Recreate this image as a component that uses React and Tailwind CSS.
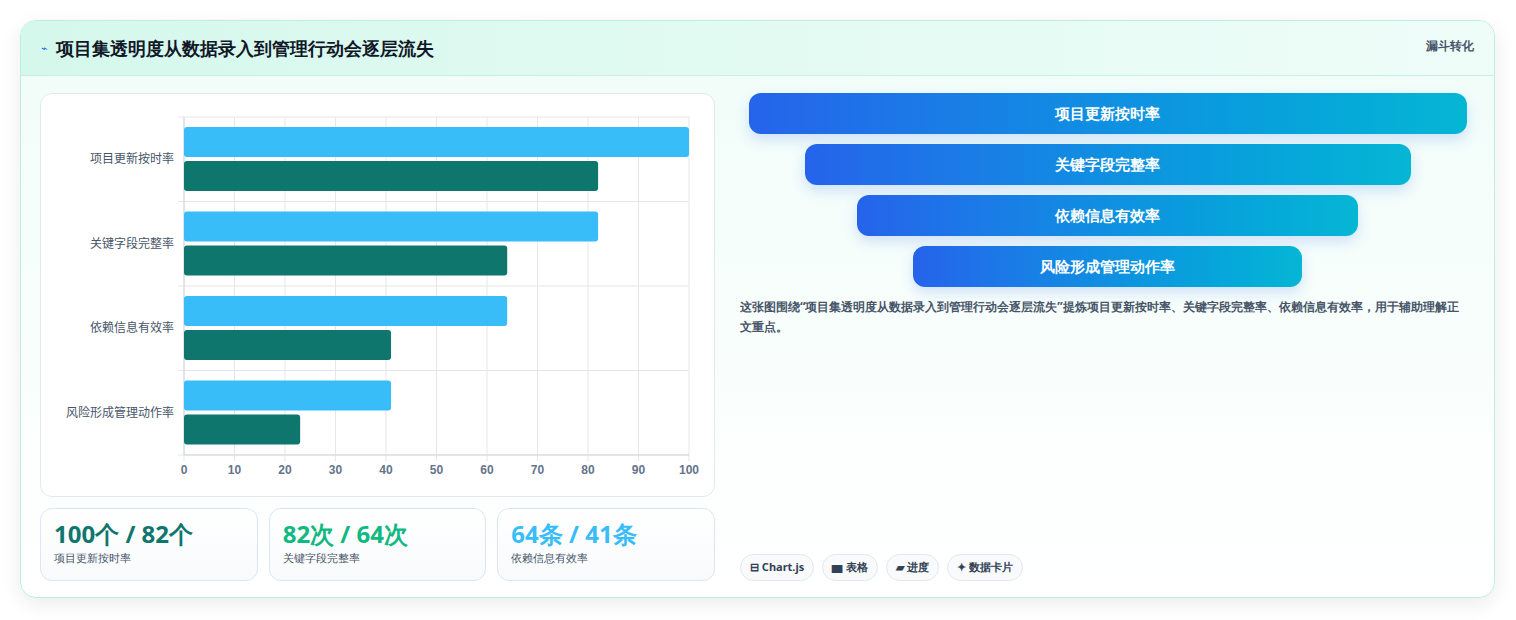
import React from "react";

const cats = [
  ["项目更新按时率", 100, 82],
  ["关键字段完整率", 82, 64],
  ["依赖信息有效率", 64, 41],
  ["风险形成管理动作率", 41, 23],
];

function Chart() {
  // svg coords relative to chart box at (40,93)
  const x0 = 143, x1 = 648, y0 = 23, y1 = 361;
  const w = x1 - x0, band = (y1 - y0) / 4;
  return (
    <svg width="674" height="403" className="block">
      {Array.from({ length: 11 }).map((_, i) => (
        <line key={i} x1={x0 + (w * i) / 10} x2={x0 + (w * i) / 10} y1={y0} y2={y1 + 6} stroke="#e5e7eb" />
      ))}
      {[0, 1, 2, 3, 4].map((i) => (
        <line key={i} x1={x0 - 6} x2={x1} y1={y0 + band * i} y2={y0 + band * i} stroke="#e5e7eb" />
      ))}
      <line x1={x0} x2={x0} y1={y0} y2={y1} stroke="#d1d5db" />
      <line x1={x0} x2={x1} y1={y1} y2={y1} stroke="#d1d5db" />
      {cats.map(([n, a, b], i) => {
        const yb = y0 + band * i;
        return (
          <g key={n}>
            <rect x={x0} y={yb + 10} width={(w * a) / 100} height={30} rx="3" fill="#38bdf8" />
            <rect x={x0} y={yb + 44} width={(w * b) / 100} height={30} rx="3" fill="#0f766e" />
            <text x={x0 - 10} y={yb + band / 2 + 4} textAnchor="end" fontSize="12" fill="#475569" fontFamily="'Noto Sans CJK SC', sans-serif">{n}</text>
          </g>
        );
      })}
      {Array.from({ length: 11 }).map((_, i) => (
        <text key={i} x={x0 + (w * i) / 10} y={y1 + 19} textAnchor="middle" fontSize="12" fontWeight="bold" fill="#64748b" fontFamily="'Liberation Sans', sans-serif">{i * 10}</text>
      ))}
    </svg>
  );
}

const stats = [
  ["100个 / 82个", "项目更新按时率", "text-[#0f766e]"],
  ["82次 / 64次", "关键字段完整率", "text-[#10b981]"],
  ["64条 / 41条", "依赖信息有效率", "text-[#38bdf8]"],
];

const funnel = [
  ["项目更新按时率", "w-[718px]"],
  ["关键字段完整率", "w-[606px]"],
  ["依赖信息有效率", "w-[501px]"],
  ["风险形成管理动作率", "w-[389px]"],
];

export default function App() {
  return (
    <div className="bg-white w-[1516px] h-[620px] pt-5 pl-5 font-['Noto_Sans_CJK_SC',sans-serif]">
      <div className="w-[1475px] h-[578px] rounded-2xl border border-[#bdeee0] shadow-[0_6px_20px_rgba(0,0,0,0.08)] overflow-hidden bg-gradient-to-b from-[#f0fdf9] to-white flex flex-col">
        <div className="h-[55px] shrink-0 bg-gradient-to-r from-[#d5f8ec] to-[#effdf9] border-b border-[#c8efe3] flex items-center px-5 relative">
          <span className="text-[#2563eb] text-[11px] mr-2">⌁</span>
          <span className="text-[18px] font-bold text-[#111827]">项目集透明度从数据录入到管理行动会逐层流失</span>
          <span className="absolute right-5 top-[16px] text-[12px] font-bold text-[#475569]">漏斗转化</span>
        </div>
        <div className="flex flex-1 pt-[17px] px-[19px] pb-[17px] gap-[15px]">
          <div className="flex flex-col w-[675px] gap-[11px]">
            <div className="h-[404px] rounded-xl border border-[#e2e8f0] bg-white overflow-hidden">
              <Chart />
            </div>
            <div className="flex gap-[11px]">
              {stats.map(([v, l, c]) => (
                <div key=  {l} className="w-[218px] h-[73px] rounded-xl border border-[#dbe6f3] bg-gradient-to-b from-white to-[#f8fafc] px-[13px] pt-[9px]">
                  <div className={`text-[24px] font-bold leading-[32px] ${c}`}>{v}</div>
                  <div className="text-[11px] text-[#475569] leading-4">{l}</div>
                </div>
              ))}
            </div>
          </div>
          <div className="flex-1 flex flex-col">
            <div className="flex flex-col items-center gap-[10px] pl-[10px]">
              {funnel.map(([n, w]) => (
                <div key={n} className={`${w} h-[41px] rounded-xl bg-gradient-to-r from-[#2563eb] to-[#06b6d4] text-white font-bold text-[15px] flex items-center justify-center shadow-[0_6px_14px_rgba(37,99,235,0.18)]`}>{n}</div>
              ))}
            </div>
            <p className="mt-[10px] px-[10px] text-[12px] font-bold text-[#475569] leading-[20px]">这张图围绕“项目集透明度从数据录入到管理行动会逐层流失”提炼项目更新按时率、关键字段完整率、依赖信息有效率，用于辅助理解正文重点。</p>
            <div className="mt-auto px-[10px] flex gap-2">
              {["⊟ Chart.js", "▆ 表格", "▰ 进度", "✦ 数据卡片"].map((t) => (
                <span key={t} className="h-[27px] px-[9px] rounded-full border border-[#e2e8f0] bg-[#f8fafc] text-[11px] font-bold text-[#334155] flex items-center">{t}</span>
              ))}
            </div>
          </div>
        </div>
      </div>
    </div>
  );
}
